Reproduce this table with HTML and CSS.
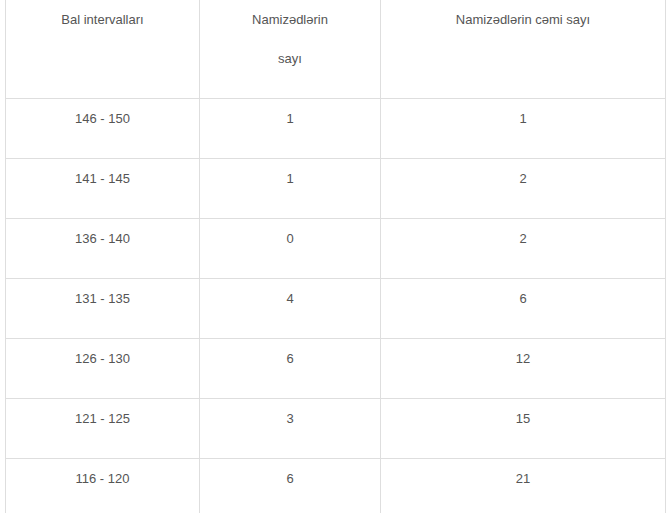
FILE: index.html
```html
<!DOCTYPE html>
<html>
<head>
<meta charset="utf-8">
<link rel="stylesheet" href="styles.css">
</head>
<body>
<table class="scores">
  <colgroup>
    <col class="c1"><col class="c2"><col class="c3">
  </colgroup>
  <thead>
    <tr>
      <th>Bal intervalları</th>
      <th>Namizədlərin<span class="second">sayı</span></th>
      <th>Namizədlərin cəmi sayı</th>
    </tr>
  </thead>
  <tbody>
    <tr><td>146 - 150</td><td>1</td><td>1</td></tr>
    <tr><td>141 - 145</td><td>1</td><td>2</td></tr>
    <tr><td>136 - 140</td><td>0</td><td>2</td></tr>
    <tr><td>131 - 135</td><td>4</td><td>6</td></tr>
    <tr><td>126 - 130</td><td>6</td><td>12</td></tr>
    <tr><td>121 - 125</td><td>3</td><td>15</td></tr>
    <tr><td>116 - 120</td><td>6</td><td>21</td></tr>
  </tbody>
</table>
</body>
</html>
```
FILE: styles.css
```css
html, body {
  margin: 0;
  background: #fff;
}
body {
  padding: 0 0 0 5px;
  font-family: "Liberation Sans", Arial, sans-serif;
  font-size: 13px;
  color: #555;
  overflow: hidden;
}
.scores {
  border-collapse: collapse;
  table-layout: fixed;
  width: 660px;
}
.c1 { width: 194px; }
.c2 { width: 181px; }
.c3 { width: 285px; }
.scores th,
.scores td {
  border: 1px solid #dedede;
  text-align: center;
  vertical-align: top;
  font-weight: normal;
  line-height: 20px;
  padding: 10px 4px 0;
  height: 49px;
}
.scores thead th {
  border-top: none;
  height: 88px;
}
.second {
  display: block;
  margin-top: 19px;
}
```
